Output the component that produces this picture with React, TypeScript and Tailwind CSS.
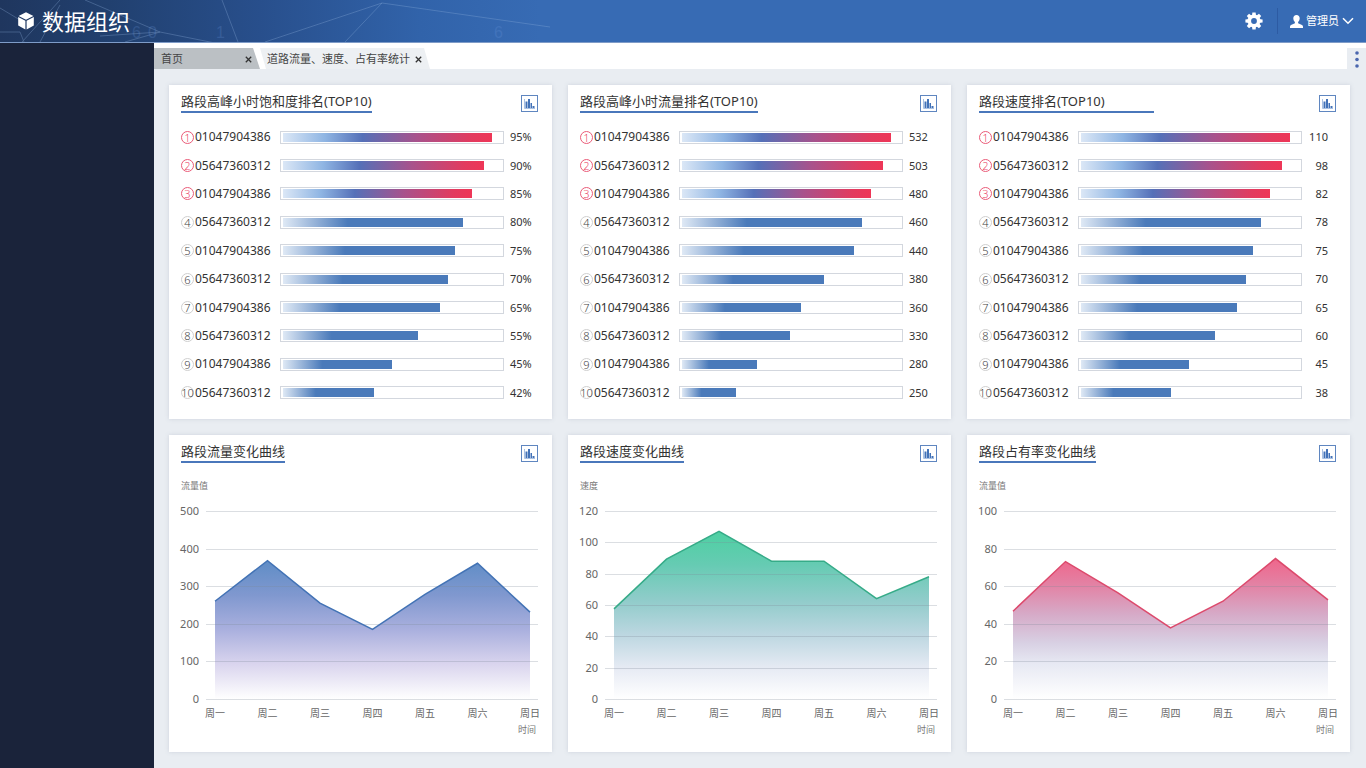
import React from "react";

type Rank = { id: string; value: string; fill: number };
type RankCardProps = { title: string; rows: Rank[]; wideRule?: boolean; alignRight?: boolean };
type Stop = [number, string];
type ChartCardProps = {
  id: string;
  title: string;
  unit: string;
  ticks: number[];
  points: number[];
  stroke: string;
  stops: Stop[];
};

const TRACK = 219;
const DAYS = ["周一", "周二", "周三", "周四", "周五", "周六", "周日"];
const TEETH = [0, 45, 90, 135, 180, 225, 270, 315];

function makeRows(values: string[], fills: number[]): Rank[] {
  return values.map((value, i) => ({
    id: i % 2 === 0 ? "01047904386" : "05647360312",
    value,
    fill: fills[i],
  }));
}

const saturation = makeRows(
  ["95%", "90%", "85%", "80%", "75%", "70%", "65%", "55%", "45%", "42%"],
  [210, 202, 190, 181, 173, 166, 158, 136, 109, 91]
);
const flow = makeRows(
  ["532", "503", "480", "460", "440", "380", "360", "330", "280", "250"],
  [210, 202, 190, 181, 173, 143, 120, 108, 75, 54]
);
const speed = makeRows(
  ["110", "98", "82", "78", "75", "70", "65", "60", "45", "38"],
  [210, 202, 190, 181, 173, 166, 157, 135, 108, 90]
);

function CubeIcon() {
  return (
    <svg viewBox="0 0 16 18" className="h-[18px] w-4" aria-hidden="true">
      <path d="M8 0.3 15.4 4 8 7.8 0.6 4Z" fill="#fff" />
      <path d="M0.2 5 7.4 8.7V17.6L0.2 13.6Z" fill="#fff" />
      <path d="M15.8 5 8.6 8.7V17.6L15.8 13.6Z" fill="#fff" />
    </svg>
  );
}

function GearIcon() {
  return (
    <svg viewBox="0 0 18 18" className="size-[18px]" aria-hidden="true">
      {TEETH.map((angle) => (
        <path key={angle} d="M7.4 0.4H10.6L11.1 4.5H6.9Z" fill="#fff" transform={"rotate(" + angle + " 9 9)"} />
      ))}
      <circle cx="9" cy="9" r="4.7" fill="none" stroke="#fff" strokeWidth="3.6" />
    </svg>
  );
}

function UserIcon() {
  return (
    <svg viewBox="0 0 13 13" className="size-[13px]" aria-hidden="true">
      <path
        fill="#fff"
        d="M6.5 0C8.5 0 9.7 1.4 9.7 3.3 9.7 4.8 9 6.3 8.1 7.1V8.3L12 10.1C12.7 10.5 13 11 13 11.8V13H0V11.8C0 11 .3 10.5 1 10.1L4.9 8.300V7.1C4 6.3 3.3 4.8 3.3 3.3 3.3 1.4 4.5 0 6.5 0Z"
      />
    </svg>
  );
}

function HeaderPattern() {
  return (
    <svg className="pointer-events-none absolute inset-0 h-[42px] w-[600px]" viewBox="0 0 600 42" aria-hidden="true">
      <g fill="none" stroke="#8fb0dc" strokeWidth="0.8" opacity="0.4">
        <path d="M0 8 20 20M60 0 22 42M0 32H20L24 42M60 5 40 42M85 0 160 32 215 43M160 32 125 42M160 32 100 36" />
        <path d="M222 0 238 42M265 42 382 3 550 27M345 42 382 3" />
      </g>
      <g fill="#6f9be0" opacity="0.22" fontSize="16" fontFamily="'Liberation Sans', sans-serif">
        <text x="132" y="38">6</text>
        <text x="148" y="38">0</text>
        <text x="216" y="38">1</text>
        <text x="494" y="38">6</text>
      </g>
    </svg>
  );
}

function CloseIcon() {
  return (
    <svg viewBox="0 0 7 7" className="size-[7px]" aria-hidden="true">
      <path d="M.8.8 6.2 6.2M6.2.8.8 6.2" stroke="#333" strokeWidth="1.3" />
    </svg>
  );
}

function ChartButton({ label }: { label: string }) {
  return (
    <button type="button" aria-label={label} className="mt-[10px] size-[17px] shrink-0">
      <svg viewBox="0 0 17 17" className="size-[17px]" aria-hidden="true">
        <rect x="0.5" y="0.5" width="16" height="16" fill="#fff" stroke="#5f86c0" />
        <path d="M3.5 4V13.5H14" fill="none" stroke="#a9c1e4" />
        <path d="M4.5 6.5H6.5V13H4.5ZM7 4H9V13H7ZM9.5 8H11V13H9.5ZM11.5 11H13.5V13H11.5Z" fill="#4272b8" />
      </svg>
    </button>
  );
}

function CardHeader({ title, wideRule }: { title: string; wideRule?: boolean }) {
  return (
    <div className="flex h-[38px] shrink-0 items-start justify-between pr-[14px] pl-3">
      <h2
        className={
          "mt-[7px] border-b-2 border-[#4a77bb] text-[13px] leading-[19px] text-[#333] " +
          (wideRule ? "min-w-[175px]" : "")
        }
      >
        {title}
      </h2>
      <ChartButton label={title + "图表"} />
    </div>
  );
}

function RankCard({ title, rows, wideRule, alignRight }: RankCardProps) {
  return (
    <section className="flex min-w-0 flex-col bg-white pb-3 shadow-[0_0_4px_rgba(120,135,160,0.25)]">
      <CardHeader title={title} wideRule={wideRule} />
      <ol className="grid flex-1 auto-rows-fr pr-[14px] pl-3">
        {rows.map((row, i) => (
          <li key={i} className="flex items-center">
            <span
              className={
                "mr-px flex size-[13px] shrink-0 items-center justify-center rounded-full border text-[11px] leading-none font-light " +
                (i < 3 ? "border-[#ea5b78] text-[#ea4a6b]" : "border-[#cfcfcf] text-[#444]")
              }
            >
              {i + 1}
            </span>
            <span className="w-[85px] shrink-0 text-xs leading-4 text-[#333]">{row.id}</span>
            <span className="h-[13px] flex-1 border border-[#d3d7de] px-[2px] py-px">
              <span
                className={
                  "block h-[9px] " +
                  (i < 3
                    ? "bg-[linear-gradient(90deg,#dbe7f6_0%,#8fb5e3_20%,#5570b8_38%,#a8528c_64%,#e23b5f_90%,#ee3657_100%)]"
                    : "bg-[linear-gradient(90deg,#dfe9f5_0%,#4a7aba_36%,#4a7aba_100%)]")
                }
                style={{ width: (row.fill / TRACK) * 100 + "%" }}
              />
            </span>
            <span
              className={
                "ml-[6px] w-[28px] shrink-0 text-[11px] leading-4 text-[#333] " + (alignRight ? "pr-2 text-right" : "")
              }
            >
              {row.value}
            </span>
          </li>
        ))}
      </ol>
    </section>
  );
}

function ChartCard({ id, title, unit, ticks, points, stroke, stops }: ChartCardProps) {
  const top = 38;
  const bottom = 226;
  const max = ticks[0];
  const x = (i: number) => 46 + i * 52.5;
  const y = (v: number) => bottom - (v / max) * (bottom - top);
  const line = points.map((v, i) => x(i) + "," + y(v)).join(" ");
  return (
    <section className="flex min-w-0 flex-col bg-white shadow-[0_0_4px_rgba(120,135,160,0.25)]">
      <CardHeader title={title} />
      <svg viewBox="0 0 383 279" className="min-h-0 w-full flex-1" role="img" aria-label={title}>
        <defs>
          <linearGradient id={id} gradientUnits="userSpaceOnUse" x1="0" x2="0" y1={y(Math.max(...points))} y2={bottom}>
            {stops.map(([at, color]) => (
              <stop key={at} offset={at} stopColor={color} />
            ))}
          </linearGradient>
        </defs>
        <polygon points={x(0) + "," + bottom + " " + line + " " + x(6) + "," + bottom} fill={"url(#" + id + ")"} />
        {ticks.map((t) => (
          <g key={t}>
            <line
              x1="37"
              x2="369"
              y1={Math.round(y(t)) + 0.5}
              y2={Math.round(y(t)) + 0.5}
              stroke="#7d8798"
              strokeOpacity="0.28"
            />
            <text x="30" y={Math.round(y(t)) + 4} textAnchor="end" fontSize="11" fill="#666">
              {t}
            </text>
          </g>
        ))}
        <polyline points={line} fill="none" stroke={stroke} strokeWidth="1.5" />
        <text x="12" y="16" fontSize="9" fill="#777">
          {unit}
        </text>
        {DAYS.map((d, i) => (
          <text key={d} x={x(i)} y="244" textAnchor="middle" fontSize="10" fill="#666">
            {d}
          </text>
        ))}
        <text x="358" y="260" textAnchor="middle" fontSize="9" fill="#777">
          时间
        </text>
      </svg>
    </section>
  );
}

export default function App() {
  return (
    <div className="flex min-h-screen flex-col font-['Noto_Sans','Noto_Sans_CJK_SC',sans-serif]">
      <header className="relative flex h-[43px] shrink-0 items-center justify-between border-b border-[#7f9cc8] bg-[linear-gradient(90deg,#1f365e_0px,#21406f_110px,#284f8c_260px,#3163aa_420px,#376bb4_540px,#376bb4_100%)]">
        <HeaderPattern />
        <div className="relative flex items-center gap-2 pl-[18px] text-white">
          <CubeIcon />
          <h1 className="text-[22px] leading-6">数据组织</h1>
        </div>
        <div className="relative flex items-center pr-3 text-white">
          <button type="button" aria-label="设置" className="flex items-center">
            <GearIcon />
          </button>
          <span className="mr-3 ml-[14px] h-[26px] w-px bg-[#2d5ba3]" />
          <button type="button" className="flex items-center gap-[3px] text-[11px] leading-4">
            <UserIcon />
            管理员
            <svg viewBox="0 0 12 8" className="h-2 w-3" aria-hidden="true">
              <path d="M1 1.2 6 6.3 11 1.2" fill="none" stroke="#fff" strokeWidth="1.5" />
            </svg>
          </button>
        </div>
      </header>
      <div className="flex flex-1">
        <aside className="w-[154px] shrink-0 bg-[#1a233a]" />
        <div className="flex min-w-0 flex-1 flex-col">
          <nav className="flex h-[26px] shrink-0 items-end bg-white text-[11px] text-[#444]">
            <div className="flex h-[21px] w-[106px] items-center justify-between bg-[#bbc0c4] px-[7px] pt-[2px] [clip-path:polygon(0_0,99px_0,100%_100%,0_100%)]">
              <a href="#home">首页</a>
              <button type="button" aria-label="关闭首页" className="p-px">
                <CloseIcon />
              </button>
            </div>
            <div className="flex h-[21px] items-center gap-1 bg-[#edf0f3] px-[7px] pt-[2px] [clip-path:polygon(0_0,calc(100%-6px)_0,100%_100%,6px_100%)]">
              <a href="#stats">道路流量、速度、占有率统计</a>
              <button type="button" aria-label="关闭统计" className="p-px">
                <CloseIcon />
              </button>
            </div>
            <button
              type="button"
              aria-label="更多"
              className="ml-auto flex h-[21px] w-[19px] items-center justify-center bg-[#e9edf2] pt-[2px]"
            >
              <svg viewBox="0 0 4 17" className="h-[17px] w-1" aria-hidden="true">
                <circle cx="2" cy="2" r="1.8" fill="#4a66ae" />
                <circle cx="2" cy="8.5" r="1.8" fill="#4a66ae" />
                <circle cx="2" cy="15" r="1.8" fill="#4a66ae" />
              </svg>
            </button>
          </nav>
          <main className="grid flex-1 grid-cols-3 grid-rows-[334fr_317fr] gap-4 bg-[#e9edf2] pt-4 pr-4 pb-4 pl-[15px]">
            <RankCard title="路段高峰小时饱和度排名(TOP10)" rows={saturation} />
            <RankCard title="路段高峰小时流量排名(TOP10)" rows={flow} />
            <RankCard title="路段速度排名(TOP10)" rows={speed} wideRule alignRight />
            <ChartCard
              id="fill-flow"
              title="路段流量变化曲线"
              unit="流量值"
              ticks={[500, 400, 300, 200, 100, 0]}
              points={[260, 368, 255, 185, 278, 361, 231]}
              stroke="#4373b5"
              stops={[
                [0, "#5f8dc6"],
                [0.25, "#8098cf"],
                [0.5, "#aab0de"],
                [0.75, "#dad5ee"],
                [1, "#ffffff"],
              ]}
            />
            <ChartCard
              id="fill-speed"
              title="路段速度变化曲线"
              unit="速度"
              ticks={[120, 100, 80, 60, 40, 20, 0]}
              points={[57.5, 89.3, 107, 88, 88, 64, 78]}
              stroke="#36ab88"
              stops={[
                [0, "#4dd0a2"],
                [0.2, "#66cbb3"],
                [0.42, "#92cccb"],
                [0.62, "#bdd7e1"],
                [0.82, "#e7ebf4"],
                [1, "#ffffff"],
              ]}
            />
            <ChartCard
              id="fill-share"
              title="路段占有率变化曲线"
              unit="流量值"
              ticks={[100, 80, 60, 40, 20, 0]}
              points={[46.7, 73.1, 56.4, 37.8, 52, 74.7, 52.7]}
              stroke="#dc4a6c"
              stops={[
                [0, "#ef668b"],
                [0.2, "#e284a6"],
                [0.4, "#d6abc8"],
                [0.6, "#d8d0e3"],
                [0.75, "#e7e9f3"],
                [1, "#ffffff"],
              ]}
            />
          </main>
        </div>
      </div>
    </div>
  );
}
